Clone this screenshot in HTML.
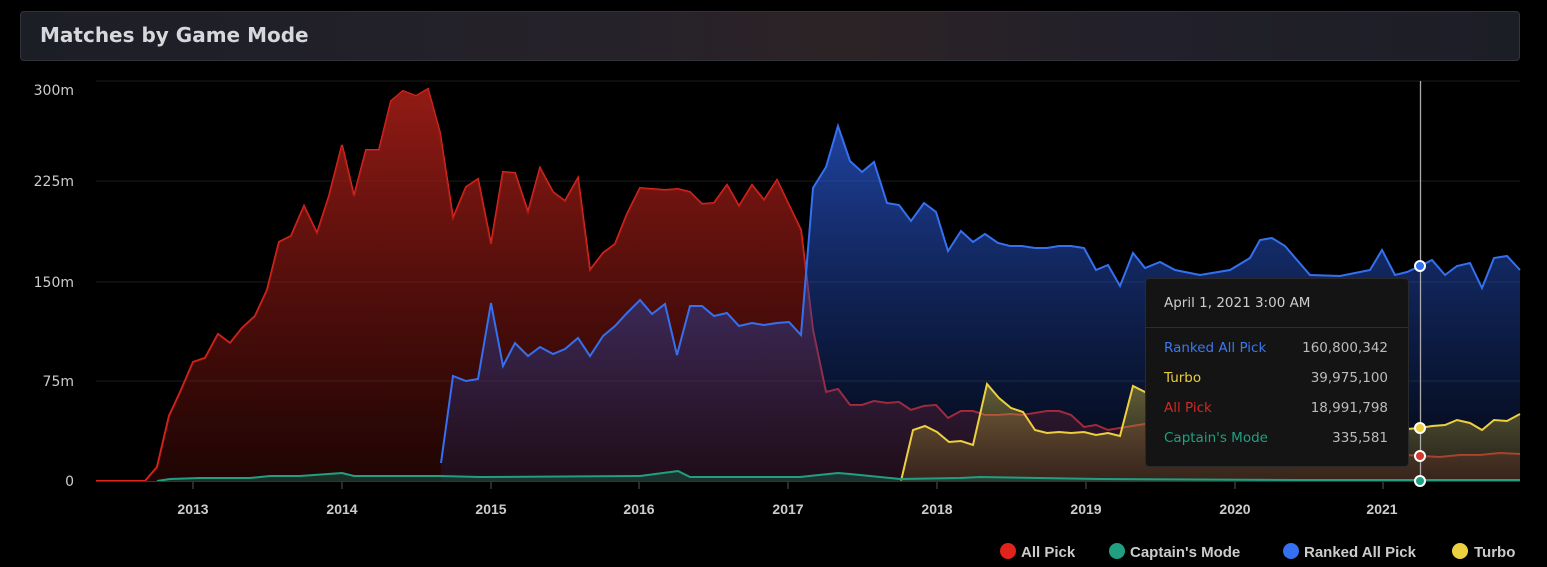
<!DOCTYPE html>
<html><head><meta charset="utf-8"><style>
body{margin:0;background:#000;width:1547px;height:567px;overflow:hidden;font-family:"Liberation Sans",sans-serif;}
.hdr{position:absolute;left:20px;top:11px;width:1498px;height:48px;border:1px solid #33343a;border-radius:4px;background:linear-gradient(90deg,#1c1e26 0%,#26222a 40%,#2c2326 55%,#22202a 75%,#1c1e26 100%);}
.hdr span{position:absolute;left:19px;top:11px;font-family:"DejaVu Sans",sans-serif;font-size:20px;font-weight:bold;color:#d8d8dc;}
.tt{position:absolute;left:1145px;top:278px;width:262px;height:187px;background:#141414;border:1px solid #2a2a2a;border-radius:4px;font-size:13.5px;font-family:"DejaVu Sans",sans-serif;}
.tt .h{position:absolute;left:18px;top:16px;color:#ccc;}
.tt .sep{position:absolute;left:0;right:0;top:48px;border-top:1px solid #2e2e2e;}
.tt .r{position:absolute;left:18px;right:20px;display:flex;justify-content:space-between;}
.tt .r b{font-weight:normal;color:#bbb;}
</style></head><body>
<div class="hdr"><span>Matches by Game Mode</span></div>
<svg width="1547" height="567" style="position:absolute;left:0;top:0" xmlns="http://www.w3.org/2000/svg" font-family="Liberation Sans, sans-serif">
<defs>
<linearGradient id="gr" gradientUnits="userSpaceOnUse" x1="0" y1="90" x2="0" y2="481"><stop offset="0" stop-color="#9a1c16" stop-opacity=".95"/><stop offset="1" stop-color="#7a1410" stop-opacity=".25"/></linearGradient>
<linearGradient id="gb" gradientUnits="userSpaceOnUse" x1="0" y1="120" x2="0" y2="481"><stop offset="0" stop-color="#2a5ad8" stop-opacity=".75"/><stop offset="1" stop-color="#1a3a90" stop-opacity=".15"/></linearGradient>
<linearGradient id="gy" gradientUnits="userSpaceOnUse" x1="0" y1="380" x2="0" y2="481"><stop offset="0" stop-color="#d8c040" stop-opacity=".45"/><stop offset="1" stop-color="#806a20" stop-opacity=".25"/></linearGradient>
</defs>
<g stroke="#1c1c1c" stroke-width="1"><line x1="96" x2="1520" y1="81" y2="81"/><line x1="96" x2="1520" y1="181" y2="181"/><line x1="96" x2="1520" y1="282" y2="282"/><line x1="96" x2="1520" y1="381" y2="381"/></g>
<g fill="#ccc" font-size="14" text-anchor="end" font-family="DejaVu Sans, sans-serif"><text x="74" y="95">300m</text><text x="74" y="186">225m</text><text x="74" y="287">150m</text><text x="74" y="386">75m</text><text x="74" y="486">0</text></g>
<path d="M96,481 L145,481 157,467 169,416 181,390 193,362 205,358 218,334 230,343 242,328 255,316 267,290 279,242 291,236 304,206 317,233 329,196 342,145 354,196 366,150 379,150 391,101 403,91 416,96 428,89 440,133 453,218 466,187 478,179 491,244 503,172 515,173 528,212 540,168 553,192 565,201 578,178 590,270 603,253 615,244 627,214 640,188 652,189 665,190 678,189 690,192 702,204 714,203 727,185 739,206 752,185 764,200 777,180 789,205 801,230 813,330 826,392 838,389 850,405 862,405 874,401 887,403 899,402 911,410 924,406 936,405 948,418 961,411 973,411 985,415 998,415 1010,414 1022,415 1035,413 1047,411 1059,411 1071,415 1084,427 1096,425 1108,430 1120,428 1145,424 1200,440 1300,450 1407,455 1420,456 1440,457 1460,455 1480,455 1500,453 1520,454" fill="none" stroke="#e0241c" stroke-width="2"/>
<path d="M96,481 L145,481 157,467 169,416 181,390 193,362 205,358 218,334 230,343 242,328 255,316 267,290 279,242 291,236 304,206 317,233 329,196 342,145 354,196 366,150 379,150 391,101 403,91 416,96 428,89 440,133 453,218 466,187 478,179 491,244 503,172 515,173 528,212 540,168 553,192 565,201 578,178 590,270 603,253 615,244 627,214 640,188 652,189 665,190 678,189 690,192 702,204 714,203 727,185 739,206 752,185 764,200 777,180 789,205 801,230 813,330 826,392 838,389 850,405 862,405 874,401 887,403 899,402 911,410 924,406 936,405 948,418 961,411 973,411 985,415 998,415 1010,414 1022,415 1035,413 1047,411 1059,411 1071,415 1084,427 1096,425 1108,430 1120,428 1145,424 1200,440 1300,450 1407,455 1420,456 1440,457 1460,455 1480,455 1500,453 1520,454 L1520,481 Z" fill="url(#gr)"/>
<path d="M441,481 L441,463 453,376 466,381 478,379 491,303 503,366 515,343 528,356 540,347 553,354 565,349 578,338 590,356 603,336 615,326 627,313 640,300 652,314 665,304 677,355 690,306 702,306 714,316 727,313 739,326 752,323 764,325 777,323 789,322 801,335 813,188 826,167 838,126 850,161 862,172 874,162 887,203 899,205 911,221 924,203 936,212 948,251 961,231 973,242 985,234 998,243 1010,246 1022,246 1035,248 1047,248 1059,246 1071,246 1084,248 1096,270 1108,265 1120,286 1133,253 1145,268 1160,262 1175,270 1200,275 1230,270 1250,258 1260,240 1272,238 1285,246 1297,260 1310,275 1340,276 1370,270 1382,250 1395,275 1407,272 1420,266 1432,260 1445,275 1457,266 1470,263 1482,288 1494,258 1507,256 1520,270 L1520,481 Z" fill="url(#gb)"/>
<path d="M441,463 453,376 466,381 478,379 491,303 503,366 515,343 528,356 540,347 553,354 565,349 578,338 590,356 603,336 615,326 627,313 640,300 652,314 665,304 677,355 690,306 702,306 714,316 727,313 739,326 752,323 764,325 777,323 789,322 801,335 813,188 826,167 838,126 850,161 862,172 874,162 887,203 899,205 911,221 924,203 936,212 948,251 961,231 973,242 985,234 998,243 1010,246 1022,246 1035,248 1047,248 1059,246 1071,246 1084,248 1096,270 1108,265 1120,286 1133,253 1145,268 1160,262 1175,270 1200,275 1230,270 1250,258 1260,240 1272,238 1285,246 1297,260 1310,275 1340,276 1370,270 1382,250 1395,275 1407,272 1420,266 1432,260 1445,275 1457,266 1470,263 1482,288 1494,258 1507,256 1520,270" fill="none" stroke="#3570f0" stroke-width="2"/>
<path d="M901,481 L913,430 925,426 937,432 949,442 961,441 973,445 987,384 999,398 1011,408 1023,412 1035,430 1047,433 1059,432 1071,433 1084,432 1096,435 1108,433 1120,436 1133,386 1145,392 1200,420 1300,428 1407,429 1420,428 1432,426 1445,425 1457,420 1470,423 1482,430 1494,420 1507,421 1520,414 L1520,481 Z" fill="url(#gy)"/>
<path d="M901,481 L913,430 925,426 937,432 949,442 961,441 973,445 987,384 999,398 1011,408 1023,412 1035,430 1047,433 1059,432 1071,433 1084,432 1096,435 1108,433 1120,436 1133,386 1145,392 1200,420 1300,428 1407,429 1420,428 1432,426 1445,425 1457,420 1470,423 1482,430 1494,420 1507,421 1520,414" fill="none" stroke="#ecd040" stroke-width="2"/>
<path d="M157,481 L170,479 200,478 250,478 270,476 300,476 342,473 354,476 440,476 480,477 640,476 678,471 690,477 800,477 838,473 850,474 900,479 960,478 980,477 1100,479 1300,480 1520,480 L1520,481 Z" fill="#1a5a48" fill-opacity=".5"/>
<path d="M157,481 L170,479 200,478 250,478 270,476 300,476 342,473 354,476 440,476 480,477 640,476 678,471 690,477 800,477 838,473 850,474 900,479 960,478 980,477 1100,479 1300,480 1520,480" fill="none" stroke="#20a080" stroke-width="2"/>
<line x1="96" x2="1520" y1="481.5" y2="481.5" stroke="#333"/>
<g stroke="#555"><line x1="193" x2="193" y1="482" y2="489"/><line x1="342" x2="342" y1="482" y2="489"/><line x1="491" x2="491" y1="482" y2="489"/><line x1="639" x2="639" y1="482" y2="489"/><line x1="788" x2="788" y1="482" y2="489"/><line x1="937" x2="937" y1="482" y2="489"/><line x1="1086" x2="1086" y1="482" y2="489"/><line x1="1235" x2="1235" y1="482" y2="489"/><line x1="1383" x2="1383" y1="482" y2="489"/></g>
<g fill="#ccc" font-size="14" font-weight="bold" text-anchor="middle"><text x="193" y="514">2013</text><text x="342" y="514">2014</text><text x="491" y="514">2015</text><text x="639" y="514">2016</text><text x="788" y="514">2017</text><text x="937" y="514">2018</text><text x="1086" y="514">2019</text><text x="1235" y="514">2020</text><text x="1382" y="514">2021</text></g>
<line x1="1420.5" x2="1420.5" y1="81" y2="481" stroke="#aaa" stroke-width="1.3"/>
<g stroke="#fff" stroke-width="2"><circle cx="1420" cy="266" r="5" fill="#3570f0"/><circle cx="1420" cy="428" r="5" fill="#ecd040"/><circle cx="1420" cy="456" r="5" fill="#d03a30"/><circle cx="1420" cy="481" r="5" fill="#20a080"/></g>
<g font-size="15" fill="#ccc" font-weight="bold">
<circle cx="1008" cy="551" r="8" fill="#e0241c"/><text x="1021" y="557">All Pick</text>
<circle cx="1117" cy="551" r="8" fill="#20a080"/><text x="1130" y="557">Captain's Mode</text>
<circle cx="1291" cy="551" r="8" fill="#3570f0"/><text x="1304" y="557">Ranked All Pick</text>
<circle cx="1460" cy="551" r="8" fill="#ecd040"/><text x="1474" y="557">Turbo</text>
</g>
</svg>
<div class="tt">
<div class="h">April 1, 2021 3:00 AM</div>
<div class="sep"></div>
<div class="r" style="top:61px"><span style="color:#3a78f0">Ranked All Pick</span><b>160,800,342</b></div>
<div class="r" style="top:91px"><span style="color:#e8cc40">Turbo</span><b>39,975,100</b></div>
<div class="r" style="top:121px"><span style="color:#d02a22">All Pick</span><b>18,991,798</b></div>
<div class="r" style="top:151px"><span style="color:#20a080">Captain's Mode</span><b>335,581</b></div>
</div>
</body></html>
